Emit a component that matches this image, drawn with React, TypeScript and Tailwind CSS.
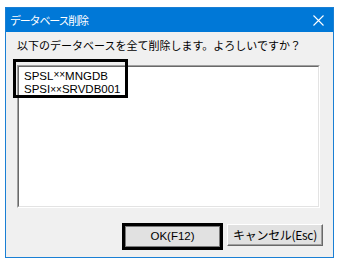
import React from 'react'

const jp = "font-['Noto_Sans_CJK_JP',sans-serif]"

const CloseIcon = () => (
  <svg width="11" height="11" viewBox="0 0 11 11" className="text-white">
    <path d="M0.5 0.5 L10.5 10.5 M10.5 0.5 L0.5 10.5" stroke="currentColor" strokeWidth="1.1" fill="none" />
  </svg>
)

export default function App() {
  return (
    <div className="w-[338px] h-[262px] bg-white pt-[7px] pl-[5px] overflow-hidden">
      <div className="relative flex h-[251px] w-[329px] flex-col border border-[#1a7fd4] bg-[#f0f0f0]">
        {/* title bar */}
        <div className="flex h-[24px] shrink-0 items-center justify-between bg-[#0078d7] pl-[4px] pr-[9px]">
          <span className={`${jp} text-[11px] tracking-[-1.2px] leading-none text-white`}>データベース削除</span>
          <CloseIcon />
        </div>

        {/* client area */}
        <div className="flex flex-1 flex-col pl-[11px] pr-[10px] pt-[6px]">
          <div className={`${jp} text-[11px] leading-[14px] text-black`}>
            以下のデータベースを全て削除します。よろしいですか？
          </div>

          <div className="mt-[13px] mr-[3px] h-[143px] border-t border-l border-[#a0a0a0] border-b border-r border-b-white border-r-white">
            <div className="h-full border-t border-l border-[#696969] border-b border-r border-b-[#e3e3e3] border-r-[#e3e3e3] bg-white px-[5px] pt-[3px]">
              <div className="font-['Liberation_Sans',Arial,sans-serif] text-[11.5px] leading-[12px] text-black">
                <div>SPSL<span className="relative -top-[2px] text-[10px]">××</span>MNGDB</div>
                <div>SPSI<span className="text-[10px]">××</span>SRVDB001</div>
              </div>
            </div>
          </div>

          <div className="mt-[15px] flex justify-end gap-[4px]">
            <div className="flex h-[27px] w-[101px] items-center justify-center border-[3px] border-black">
              <div className="flex h-full w-full items-center justify-center border border-[#7a7a7a] bg-[#e1e1e1] font-['Liberation_Sans',Arial,sans-serif] text-[11.5px] text-black">
                OK(F12)
              </div>
            </div>
            <div className="mt-[1px] flex h-[22px] w-[96px] items-center justify-center border border-t-white border-l-white border-b-[#696969] border-r-[#696969] bg-[#e1e1e1] shadow-[inset_-1px_-1px_0_#a0a0a0]">
              <span className={`${jp} text-[12px] tracking-[-0.3px] text-black`}>キャンセル(Esc)</span>
            </div>
          </div>
        </div>

        {/* annotation frame over the list */}
        <div className="pointer-events-none absolute left-[7px] top-[51px] h-[39px] w-[115px] border-[3px] border-black" />
      </div>
    </div>
  )
}
